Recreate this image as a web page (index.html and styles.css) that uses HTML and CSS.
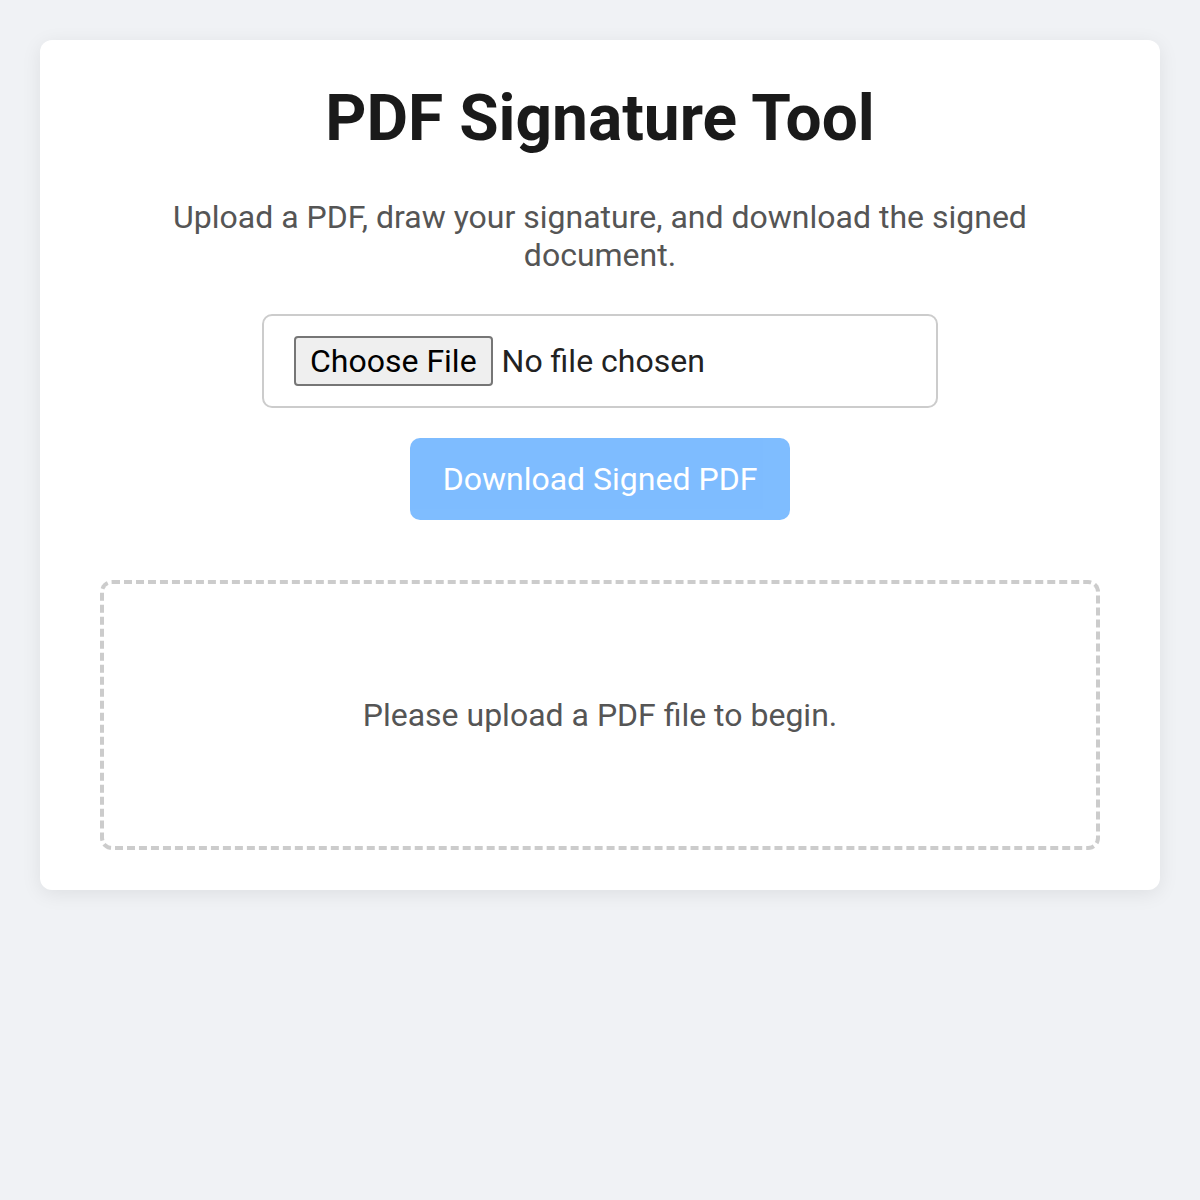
FILE: index.html
```html
<!DOCTYPE html>
<html lang="en">
  <head>
    <meta charset="UTF-8" />
    <meta name="viewport" content="width=device-width, initial-scale=1.0" />
    <title>PDF Signature Tool</title>
    <link rel="stylesheet" href="styles.css">
  </head>
  <body>
    <div class="container">
      <h1>PDF Signature Tool</h1>
      <p class="intro">
        Upload a PDF, draw your signature, and download the signed document.
      </p>

      <div class="upload-box">
        <input type="file" id="pdfInput" accept="application/pdf" />
      </div>

      <button id="downloadBtn" class="download-btn" disabled>Download Signed PDF</button>

      <div class="preview" id="preview">
        <p class="placeholder">Please upload a PDF file to begin.</p>
      </div>
    </div>
  </body>
</html>
```

FILE: styles.css
```css
body {
  font-family: Roboto, "Liberation Sans", Arial, sans-serif;
  margin: 0;
  padding: 40px;
  background-color: #f0f2f5;
  color: #1a1a1a;
}

.container {
  background-color: #ffffff;
  border-radius: 12px;
  box-shadow: 0 4px 20px rgba(0, 0, 0, 0.08);
  padding: 40px 60px;
  text-align: center;
}

h1 {
  font-size: 64px;
  font-weight: 700;
  margin: 0 0 40px;
  line-height: 78px;
  color: #1a1a1a;
}

.intro {
  font-size: 32px;
  line-height: 38px;
  color: #555;
  margin: 0 0 40px;
}

.upload-box {
  width: 676px;
  margin: 0 auto 30px;
  padding: 20px 30px;
  border: 2px solid #ccc;
  border-radius: 10px;
  box-sizing: border-box;
  text-align: left;
}

.upload-box input {
  font-family: Roboto, "Liberation Sans", Arial, sans-serif;
  font-size: 32px;
  color: #222;
}

.upload-box input::file-selector-button {
  font-family: inherit;
  font-size: 32px;
  padding: 4px 14px;
  margin-right: 9px;
  background-color: #efefef;
  border: 2px solid #767676;
  border-radius: 4px;
  color: #000;
}

.download-btn {
  font-family: inherit;
  font-size: 32px;
  width: 380px;
  height: 82px;
  background-color: #007bff;
  opacity: 0.5;
  color: #fff;
  border: none;
  border-radius: 10px;
}

.preview {
  margin-top: 60px;
  height: 270px;
  border: 4px dashed #ccc;
  border-radius: 12px;
  box-sizing: border-box;
  display: flex;
  align-items: center;
  justify-content: center;
}

.placeholder {
  font-size: 32px;
  color: #555;
  margin: 0;
}
```
